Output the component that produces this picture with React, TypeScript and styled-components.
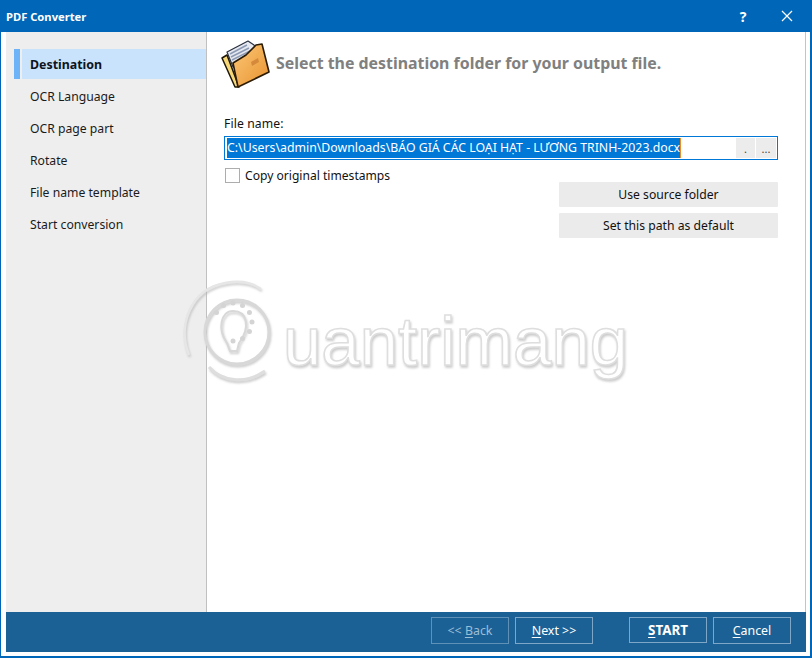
import React from "react";
import styled, { createGlobalStyle } from "styled-components";

const Global = createGlobalStyle`
  html, body { margin: 0; padding: 0; background: #fff; }
  body { font-family: "Noto Sans", "DejaVu Sans", sans-serif; }
  #root { width: 812px; height: 658px; }
`;

const Win = styled.div`
  width: 812px; height: 658px; box-sizing: border-box;
  display: flex; flex-direction: column;
  border: solid #0067b8; border-width: 0 2px 2px 1px;
  background: #fff;
  font-size: 12.2px; color: #111;
`;
const TitleBar = styled.header`
  height: 32px; flex: none; margin: 0 -2px 0 -1px;
  background: #0067b8; color: #fff;
  display: flex; align-items: center;
  padding: 0 3px 0 6px;
`;
const TitleText = styled.span`
  font-weight: 700; font-size: 11.2px; flex: 1;
`;
const TitleBtn = styled.button`
  width: 44px; height: 32px; padding: 0; border: 0; background: none; color: #fff;
  display: flex; align-items: center; justify-content: center;
  font: 700 14px "Noto Sans", sans-serif;
`;
const Body = styled.div`
  flex: 1; display: flex; flex-direction: column;
  padding: 0 4px 4px 5px; min-height: 0;
`;
const Main = styled.div`
  flex: 1; display: flex; min-height: 0; position: relative;
  border-right: 1px solid #c4c4c4;
`;
const Sidebar = styled.nav`
  width: 201px; flex: none; background: #eeeeee; box-sizing: border-box;
  border-right: 1px solid #c0c0c0;
  padding: 17px 0 0 8px;
  display: flex; flex-direction: column; gap: 2px;
`;
const NavItem = styled.div<{ $active?: boolean }>`
  height: 30px; display: flex; align-items: center;
  box-sizing: border-box;
  padding-left: ${p => (p.$active ? "10px" : "16px")};
  font-weight: ${p => (p.$active ? 700 : 400)};
  font-size: ${p => (p.$active ? "12.4px" : "inherit")};
  border-left: ${p => (p.$active ? "6px solid #6db3f8" : "0")};
  background: ${p => (p.$active ? "linear-gradient(90deg,#eee 2px,#cae3fc 2px)" : "none")};
  color: ${p => (p.$active ? "#0d1420" : "#1a1a1a")};
`;
const Content = styled.main`
  flex: 1; padding: 0 27px 0 17px; min-width: 0;
`;
const Heading = styled.div`
  display: flex; align-items: center; gap: 5px; height: 64px; margin-left: -3px;
`;
const HeadingText = styled.h1`
  margin: 0 0 2px; font-size: 15.9px; font-weight: 700; color: #808080; white-space: nowrap;
`;
const FieldLabel = styled.label`
  display: block; margin-top: 20px; line-height: 16px; height: 16px; letter-spacing: 0.1px;
`;
const Input = styled.div`
  margin-top: 4px; height: 24px; box-sizing: border-box;
  border: 1px solid #0078d7; display: flex; align-items: center;
  padding: 0 1px 0 2px; background: #fff;
`;
const Selected = styled.span`
  background: #0078d7; color: #fff; height: 20px; line-height: 20px; font-size: 12.3px;
  white-space: nowrap; border-right: 1px solid #f08a24; flex: none;
`;
const Spacer = styled.div`flex: 1;`;
const MiniBtn = styled.div`
  width: 19px; height: 20px; margin-left: 1px; background: #ececec; color: #444;
  display: flex; align-items: center; justify-content: center; font-size: 11px;
  &:last-child { width: 20px; }
`;
const CheckRow = styled.div`
  margin: 7px 0 0 1px; display: flex; align-items: center; gap: 5px; height: 16px; font-size: 12.1px;
`;
const Box = styled.span`
  width: 15px; height: 15px; box-sizing: border-box; border: 1px solid #adadad; background: #fff; display: block; flex: none;
`;
const SideButtons = styled.div`
  margin: -1px 0 0 auto; width: 219px; display: flex; flex-direction: column; gap: 6px;
`;
const GreyBtn = styled.button`
  height: 25px; padding: 0; border: 0; border-radius: 1px; background: #ebebeb; color: #111;
  font: inherit;
`;
const Watermark = styled.svg`
  position: absolute; left: 169px; top: 243px; pointer-events: none;
`;
const BottomBar = styled.footer`
  height: 40px; flex: none; background: #1c6195;
  display: flex; align-items: flex-start; padding: 5px 15px 0 0; box-sizing: border-box;
`;
const FootBtn = styled.button<{ $disabled?: boolean; $strong?: boolean; $gap?: number }>`
  width: 78px; height: ${p => (p.$strong ? 26 : 27)}px; padding: 0;
  margin-left: ${p => p.$gap ?? 6}px;
  border: 1px solid ${p => (p.$disabled ? "#5f90b5" : "#7ea6c6")};
  background: transparent;
  color: ${p => (p.$disabled ? "#9dbdd5" : "#fff")};
  font: ${p => (p.$strong ? "700 13.4px" : "400 12.4px")} "Noto Sans", sans-serif;
  u { text-underline-offset: 2px; }
`;

function Folder() {
  return (
    <svg width="50" height="50" viewBox="0 0 50 50" style={{ flex: "none" }}>
      <defs>
        <linearGradient id="fo" x1="0" y1="0" x2="1" y2="1">
          <stop offset="0" stopColor="#fcc877" />
          <stop offset="1" stopColor="#e8922f" />
        </linearGradient>
      </defs>
      <path d="M1 19 L6 16 L18 48 L14 48 Z" fill="#f7d878" stroke="#1f1808" strokeWidth="1.5" strokeLinejoin="round" />
      <path d="M6 13 L27 2 L33 6 L36 12 L25 22 L12 28 Z" fill="#e6e9f0" stroke="#2a3040" strokeWidth="1.2" strokeLinejoin="round" />
      <path d="M9 15 L26 6 M10 18 L28 9 M11 21 L29 12" stroke="#8c9ab5" strokeWidth="1.5" />
      <path d="M12 24 L25 16 L35 6 L41 5 L48 33 L17 48 Z" fill="url(#fo)" stroke="#2c1c06" strokeWidth="1.6" strokeLinejoin="round" />
      <path d="M30 23 L37 19 L38 23 L31 27 Z" fill="#d48a3a" />
    </svg>
  );
}

function Logo() {
  const letters: React.CSSProperties = { fontFamily: "'Liberation Sans', sans-serif", fontSize: 69 };
  return (
    <Watermark width="470" height="125" viewBox="0 0 470 125">
      <defs>
        <filter id="ws" x="-5%" y="-5%" width="110%" height="115%">
          <feDropShadow dx="1" dy="2" stdDeviation="1" floodColor="#b5b5b5" floodOpacity="0.7" />
        </filter>
      </defs>
      <g filter="url(#ws)" fill="#fff" stroke="#dedede" strokeWidth="1.5">
        <circle cx="62" cy="57" r="32" fill="none" stroke="#d8d8d8" strokeWidth="3" />
        <path d="M14 80 C2 50 16 14 50 8 C66 5 78 8 86 14" fill="none" stroke="#e6e6e6" strokeWidth="2.5" />
        <path d="M34 92 C46 106 70 110 90 96" fill="none" strokeWidth="3" />
        <path d="M52 68 C42 54 46 36 58 36 C72 36 76 52 64 68 L62 76 L55 76 Z" fill="none" stroke="#d8d8d8" strokeWidth="2" />
        <text x="108" y="90" style={letters}>uantrimang</text>
      </g>
      <g fill="#d4d4d4">
        {[0, 1, 2, 3, 4, 5, 6, 7, 8].map(i => {
          const a = (Math.PI * (i * 30 - 120 - 30)) / 180;
          return <circle key={i} cx={58 + 19 * Math.cos(a)} cy={47 + 19 * Math.sin(a)} r="2.5" />;
        })}
      </g>
    </Watermark>
  );
}

export default function App() {
  return (
    <>
      <Global />
      <Win>
        <TitleBar>
          <TitleText>PDF Converter</TitleText>
          <TitleBtn>?</TitleBtn>
          <TitleBtn aria-label="Close">
            <svg width="12" height="12" viewBox="0 0 12 12"><path d="M1 1 L11 11 M11 1 L1 11" stroke="#fff" strokeWidth="1.2" fill="none" /></svg>
          </TitleBtn>
        </TitleBar>
        <Body>
          <Main>
            <Sidebar>
              <NavItem $active>Destination</NavItem>
              <NavItem>OCR Language</NavItem>
              <NavItem>OCR page part</NavItem>
              <NavItem>Rotate</NavItem>
              <NavItem>File name template</NavItem>
              <NavItem>Start conversion</NavItem>
            </Sidebar>
            <Content>
              <Heading>
                <Folder />
                <HeadingText>Select the destination folder for your output file.</HeadingText>
              </Heading>
              <FieldLabel>File name:</FieldLabel>
              <Input>
                <Selected>C:\Users\admin\Downloads\BÁO GIÁ CÁC LOẠI HẠT - LƯƠNG TRINH-2023.docx</Selected>
                <Spacer />
                <MiniBtn>.</MiniBtn>
                <MiniBtn>...</MiniBtn>
              </Input>
              <CheckRow>
                <Box />
                <span>Copy original timestamps</span>
              </CheckRow>
              <SideButtons>
                <GreyBtn>Use source folder</GreyBtn>
                <GreyBtn>Set this path as default</GreyBtn>
              </SideButtons>
            </Content>
            <Logo />
          </Main>
          <BottomBar>
            <Spacer />
            <FootBtn $disabled>&lt;&lt; <u>B</u>ack</FootBtn>
            <FootBtn><u>N</u>ext &gt;&gt;</FootBtn>
            <FootBtn $strong $gap={36}><u>S</u>TART</FootBtn>
            <FootBtn><u>C</u>ancel</FootBtn>
          </BottomBar>
        </Body>
      </Win>
    </>
  );
}
